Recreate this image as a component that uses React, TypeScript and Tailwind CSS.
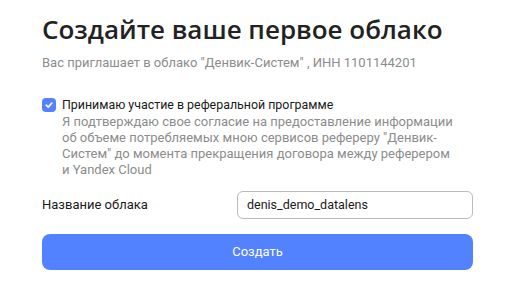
import React from "react";

export default function App() {
  return (
    <div className="w-[517px] h-[304px] bg-white" style={{ fontFamily: "Roboto, 'Noto Sans', sans-serif" }}>
      <div className="ml-[42px] w-[431px] pt-[12px]">
        <h1 className="text-[26px] leading-[34px] font-semibold text-[#222222]" style={{ fontFamily: "'Open Sans', Roboto, sans-serif" }}>Создайте ваше первое облако</h1>
        <p className="mt-[8px] text-[13px] leading-[18px] text-[#8c8c8c]">
          Вас приглашает в облако "Денвик-Систем" , ИНН 1101144201
        </p>
        <div className="mt-[24px] flex gap-[6px]">
          <div className="mt-[2px] w-[14px] h-[14px] rounded-[4px] bg-[#5282ff] flex items-center justify-center shrink-0">
            <svg width="10" height="10" viewBox="0 0 10 10" fill="none">
              <path d="M2.2 5.2 L4.2 7.1 L7.9 3" stroke="white" strokeWidth="1.6" strokeLinecap="round" strokeLinejoin="round" />
            </svg>
          </div>
          <div>
            <div className="text-[12.4px] leading-[18px] text-[#1a1a1a]">Принимаю участие в реферальной программе</div>
            <div className="text-[13px] leading-[16px] text-[#8c8c8c] whitespace-nowrap">
              Я подтверждаю свое согласие на предоставление информации
              <br />
              об объеме потребляемых мною сервисов рефереру "Денвик-
              <br />
              Систем" до момента прекращения договора между реферером
              <br />
              и Yandex Cloud
            </div>
          </div>
        </div>
        <div className="mt-[13px] flex items-center justify-between">
          <span className="text-[13px] text-[#1a1a1a]">Название облака</span>
          <div className="w-[236px] h-[28px] rounded-[6px] border border-[#bbbbbb] flex items-center px-[9px] text-[12.5px] text-[#1a1a1a]">
            denis_demo_datalens
          </div>
        </div>
        <button className="mt-[15px] w-full h-[36px] rounded-[8px] bg-[#5282ff] text-white text-[13px]">Создать</button>
      </div>
    </div>
  );
}
